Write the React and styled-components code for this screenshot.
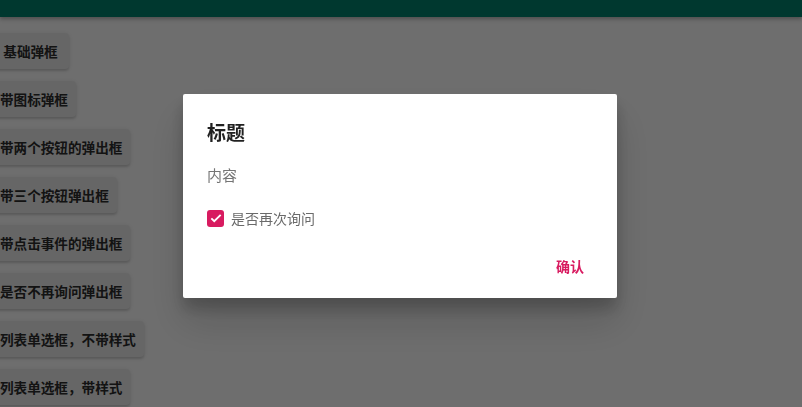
import React from 'react';
import styled, { createGlobalStyle } from 'styled-components';

const GlobalStyle = createGlobalStyle`
    html, body {
        margin: 0;
        padding: 0;
        width: 802px;
        height: 407px;
        overflow: hidden;
        background: #dcdcdc;
        font-family: "Noto Sans CJK SC", "Noto Sans", Roboto, sans-serif;
    }
`;

const Page = styled.div`
    width: 802px;
    height: 407px;
    display: flex;
    flex-direction: column;
`;

const AppBar = styled.header`
    height: 17px;
    background: #00705f;
    flex-shrink: 0;
    box-shadow: 0 2px 4px rgba(0,0,0,0.3);
`;

const ButtonList = styled.div`
    display: flex;
    flex-direction: column;
    align-items: flex-start;
    gap: 12px;
    padding-top: 16px;
    margin-left: -8px;
`;

const DemoButton = styled.button`
    height: 36px;
    min-width: 77px;
    padding: 0 8px;
    border: none;
    border-radius: 4px;
    background: #cdcdcd;
    color: #262626;
    font-family: inherit;
    font-size: 13.6px;
    font-weight: 700;
    text-align: center;
    box-shadow: 0 2px 2px rgba(0,0,0,0.12), 0 1px 4px rgba(0,0,0,0.1);
`;

const Overlay = styled.div`
    position: fixed;
    inset: 0;
    background: rgba(0,0,0,0.5);
    display: flex;
    align-items: center;
    justify-content: center;
    padding: 0 2px 15px 0;
    box-sizing: border-box;
`;

const Dialog = styled.div`
    width: 434px;
    height: 204px;
    background: #fff;
    border-radius: 2px;
    box-sizing: border-box;
    padding: 26px 24px 0 24px;
    display: flex;
    flex-direction: column;
    box-shadow: 0 11px 15px rgba(0,0,0,0.2), 0 24px 38px rgba(0,0,0,0.14);
`;

const Title = styled.h2`
    margin: 0;
    font-size: 19px;
    line-height: 24px;
    font-weight: 700;
    color: #212121;
`;

const Content = styled.p`
    margin: 20px 0 0 0;
    font-size: 15px;
    line-height: 22px;
    color: #757575;
`;

const CheckRow = styled.label`
    display: flex;
    align-items: center;
    gap: 7px;
    margin-top: 22px;
    font-size: 14px;
    color: #6a6a6a;
`;

const Box = styled.span`
    width: 17px;
    height: 17px;
    border-radius: 3px;
    background: #d81b60;
    display: flex;
    align-items: center;
    justify-content: center;
`;

const Actions = styled.div`
    display: flex;
    justify-content: flex-end;
    margin-top: 28px;
    margin-right: 9px;
`;

const ActionButton = styled.button`
    border: none;
    background: none;
    padding: 0;
    color: #d81b60;
    font-family: inherit;
    font-size: 14px;
    font-weight: 700;
`;

const items = [
    '基础弹框',
    '带图标弹框',
    '带两个按钮的弹出框',
    '带三个按钮弹出框',
    '带点击事件的弹出框',
    '是否不再询问弹出框',
    '列表单选框，不带样式',
    '列表单选框，带样式',
];

const App = () => {
    return (
        <Page>
            <GlobalStyle />
            <AppBar />
            <ButtonList>
                {items.map((t) => <DemoButton key={t}>{t}</DemoButton>)}
            </ButtonList>
            <Overlay>
                <Dialog>
                    <Title>标题</Title>
                    <Content>内容</Content>
                    <CheckRow>
                        <Box>
                            <svg width="14" height="14" viewBox="0 0 24 24">
                                <path d="M4 12.5l5 5L20 6.5" fill="none" stroke="#fff" strokeWidth="3.2" />
                            </svg>
                        </Box>
                        是否再次询问
                    </CheckRow>
                    <Actions>
                        <ActionButton>确认</ActionButton>
                    </Actions>
                </Dialog>
            </Overlay>
        </Page>
    );
}

export default App;
